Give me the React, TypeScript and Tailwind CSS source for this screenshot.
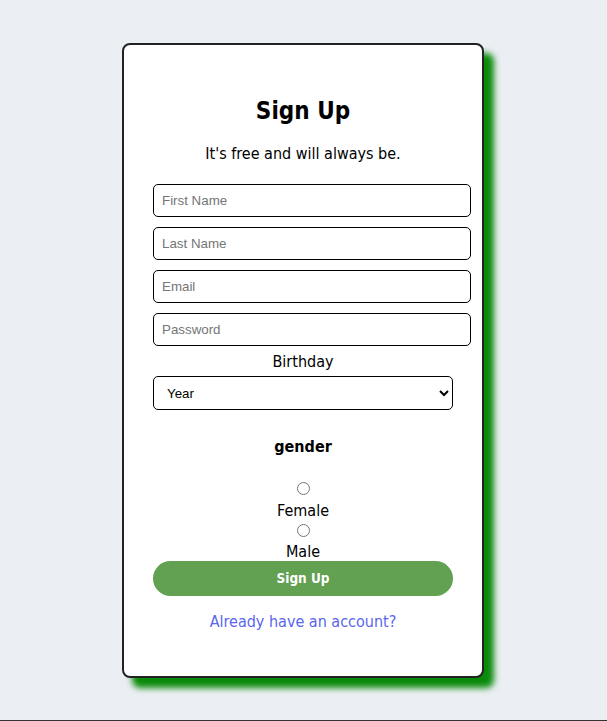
export default function App() {
  return (
    <div className="h-[721px] border-b border-[#333] bg-[#ebeef3] pt-[43px] font-['DejaVu_Sans_Condensed','DejaVu_Sans',sans-serif]">
      <div className="ml-[122px] flex h-[635px] w-[362px] flex-col items-center rounded-lg border-2 border-[#222] bg-white px-[29px] pt-[48px] shadow-[10px_10px_6px_#0a8a0a]">
        <h1 className="text-[24px] font-bold leading-[36px] text-black">Sign Up</h1>
        <p className="mt-[14px] text-[16px] leading-[22px] text-black">It's free and will always be.</p>
        <div className="mt-[19px] flex w-full flex-col gap-[10px]">
          {["First Name", "Last Name", "Email", "Password"].map((p) => (
            <input
              key={p}
              placeholder={p}
              className="h-[33px] w-[318px] rounded-[5px] border border-black px-[8px] font-['Liberation_Sans',sans-serif] text-[13.33px] placeholder:text-[#757575]"
            />
          ))}
        </div>
        <label className="mt-[5px] text-[16px] leading-[22px] text-black">Birthday</label>
        <select className="mt-[3px] h-[34px] w-[300px] rounded-[5px] border border-black bg-white px-[9px] font-['Liberation_Sans',sans-serif] text-[13.33px] text-black">
          <option>Year</option>
        </select>
        <h3 className="mt-[26px] text-[16px] font-bold leading-[22px] text-black">gender</h3>
        <div className="mt-[24px] flex flex-col items-center text-[16px] leading-[18px] text-black">
          <input type="radio" name="g" className="m-0 h-[13px] w-[13px]" />
          <span className="mt-[7px]">Female</span>
          <input type="radio" name="g" className="m-0 mt-[4px] h-[13px] w-[13px]" />
          <span className="mt-[6px]">Male</span>
        </div>
        <button className="h-[35px] w-[300px] rounded-full bg-[#62a052] text-[13.5px] font-bold text-white">
          Sign Up
        </button>
        <a className="mt-[15px] text-[16px] leading-[22px] text-[#5a66ee]">Already have an account?</a>
      </div>
    </div>
  );
}
